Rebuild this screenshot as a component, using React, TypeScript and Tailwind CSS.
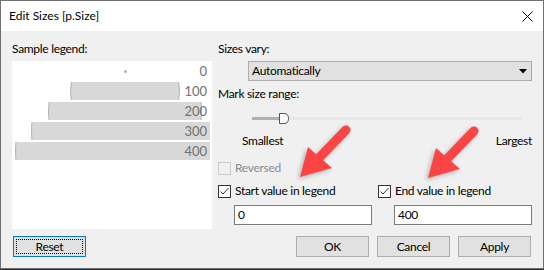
import React from 'react';

const legendRows = [
  { value: 0, diameter: 3 },
  { value: 100, diameter: 110 },
  { value: 200, diameter: 154 },
  { value: 300, diameter: 188 },
  { value: 400, diameter: 220 },
];

function CheckBox({ checked, disabled }: { checked?: boolean; disabled?: boolean }) {
  return (
    <div
      className={`w-[13px] h-[13px] shrink-0 border flex items-center justify-center ${
        disabled ? 'border-[#cccccc] bg-[#f0f0f0]' : 'border-[#333333] bg-white'
      }`}
    >
      {checked && (
        <svg width="11" height="11" viewBox="0 0 11 11">
          <polyline points="1.5,5.5 4,8 9.5,2" fill="none" stroke="#333333" strokeWidth="1" />
        </svg>
      )}
    </div>
  );
}

function Button({ label, focused }: { label: string; focused?: boolean }) {
  return (
    <div
      className={`w-[73px] h-[21px] flex items-center justify-center bg-[#e1e1e1] border ${
        focused ? 'border-[#0078d7]' : 'border-[#adadad]'
      }`}
    >
      {focused ? (
        <div className="w-[67px] h-[15px] border border-dotted border-black flex items-center justify-center">
          {label}
        </div>
      ) : (
        label
      )}
    </div>
  );
}

function Arrow({ dx, dy }: { dx: number; dy: number }) {
  return (
    <g transform={`translate(${dx} ${dy})`}>
      <line x1="346" y1="130" x2="318" y2="159" stroke="#fb4444" strokeWidth="9" strokeLinecap="round" />
      <polygon points="300,177 308,147 332,168" fill="#fb4444" />
    </g>
  );
}

export default function App() {
  return (
    <div
      className="w-[544px] h-[270px] bg-[#2d2d2d] text-[12px] text-black tracking-[-0.3px]"
      style={{ fontFamily: '"Segoe UI", Lato, "Liberation Sans", sans-serif' }}
    >
      <div className="relative w-[544px] h-[269px] border border-[#707070] bg-[#f0f0f0] flex flex-col">
        {/* Title bar */}
        <div className="h-[30px] bg-white flex items-center pl-[8px] pr-[10px]">
          <span className="leading-[16px] tracking-normal">Edit Sizes [p.Size]</span>
          <svg className="ml-auto" width="11" height="11" viewBox="0 0 11 11">
            <path d="M0.5 0.5 L10.5 10.5 M10.5 0.5 L0.5 10.5" stroke="#000" strokeWidth="1" />
          </svg>
        </div>

        {/* Body */}
        <div className="flex pt-[10px]">
          {/* Left: sample legend */}
          <div className="ml-[11px] w-[200px] flex flex-col">
            <div className="h-[16px] leading-[16px]">Sample legend:</div>
            <div className="mt-[4px] h-[168px] bg-white pt-[1px] pr-[2px] flex flex-col gap-[2px]">
              {legendRows.map((row) => (
                <div key={row.value} className="relative h-[18px] overflow-hidden flex items-center">
                  <div
                    className={`shrink-0 rounded-full ${
                      row.value === 0 ? 'bg-[#b0b0b0]' : 'bg-[#d8d8d8] border border-[#b3b3b3]'
                    }`}
                    style={{
                      width: row.diameter,
                      height: row.diameter,
                      marginLeft: 113 - row.diameter / 2,
                    }}
                  />
                  <span className="absolute right-[3px] top-0 leading-[18px] text-[#707070] text-[13px] tracking-normal">
                    {row.value}
                  </span>
                </div>
              ))}
            </div>
          </div>

          {/* Right: options */}
          <div className="ml-[6px] w-[314px] flex flex-col">
            <div className="h-[16px] leading-[16px]">Sizes vary:</div>
            <div className="mt-[4px] ml-[30px] h-[20px] bg-[#e1e1e1] border border-[#adadad] flex items-center pl-[3px] pr-[4px]">
              <span className="leading-[16px]">Automatically</span>
              <svg className="ml-auto" width="8" height="5" viewBox="0 0 8 5">
                <polygon points="0,0 8,0 4,4.5" fill="#000" />
              </svg>
            </div>
            <div className="mt-[5px] h-[16px] leading-[16px]">Mark size range:</div>
            <div className="mt-[11px] ml-[34px] w-[270px] h-[11px] flex items-center">
              <div className="w-[27px] h-[3px] bg-[#b1b1b1]" />
              <svg width="10" height="11" viewBox="0 0 10 11" className="shrink-0">
                <path
                  d="M0.5 0.5 H5 Q9.5 0.5 9.5 5.5 Q9.5 10.5 5 10.5 H0.5 Z"
                  fill="#fff"
                  stroke="#555"
                  strokeWidth="1"
                />
              </svg>
              <div className="flex-1 h-[3px] bg-[#e7e7e7]" />
            </div>
            <div className="mt-[9px] pl-[24px] h-[16px] leading-[16px] flex justify-between">
              <span>Smallest</span>
              <span>Largest</span>
            </div>

            <div className="grid grid-cols-[154px_154px] gap-x-[6px]">
              <div className="mt-[11px] h-[16px] flex items-center gap-[4px] text-[#8b8b8b]">
                <CheckBox disabled />
                <span className="leading-[16px]">Reversed</span>
              </div>
              <div />
              <div className="mt-[7px] h-[16px] flex items-center gap-[4px]">
                <CheckBox checked />
                <span className="leading-[16px]">Start value in legend</span>
              </div>
              <div className="mt-[7px] h-[16px] flex items-center gap-[4px]">
                <CheckBox checked />
                <span className="leading-[16px]">End value in legend</span>
              </div>
              <div className="mt-[6px] ml-[16px] h-[20px] bg-white border border-[#7a7a7a] pl-[3px] flex items-center">
                <span className="leading-[16px]">0</span>
              </div>
              <div className="mt-[6px] ml-[16px] h-[20px] bg-white border border-[#7a7a7a] pl-[3px] flex items-center">
                <span className="leading-[16px]">400</span>
              </div>
            </div>
          </div>
        </div>

        {/* Buttons */}
        <div className="mt-[7px] flex pl-[12px] pr-[12px]">
          <Button label="Reset" focused />
          <div className="ml-auto flex gap-[8px]">
            <Button label="OK" />
            <Button label="Cancel" />
            <Button label="Apply" />
          </div>
        </div>

        {/* Red callout arrows */}
        <svg
          className="absolute left-[-1px] top-[-1px] pointer-events-none"
          width="544"
          height="269"
          style={{ filter: 'drop-shadow(-2px 2px 2px rgba(0,0,0,0.25))' }}
        >
          <Arrow dx={0} dy={0} />
          <Arrow dx={128} dy={1} />
        </svg>
      </div>
    </div>
  );
}
